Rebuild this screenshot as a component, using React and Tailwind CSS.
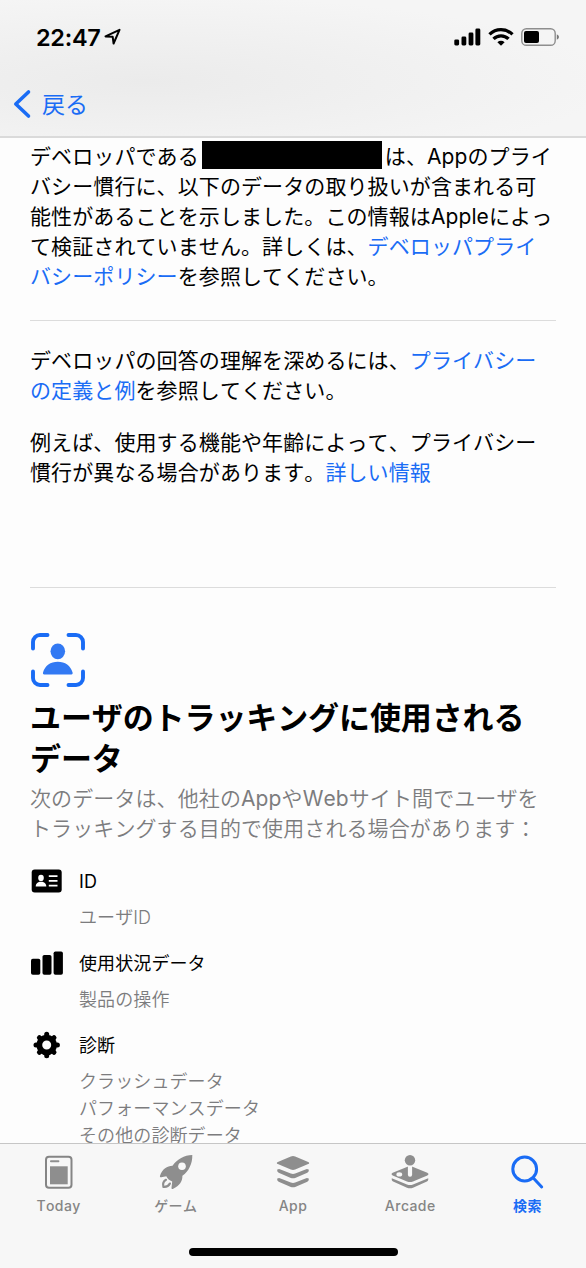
const BLUE = "#1a6cf5";

const items = [
  { title: "ID", icon: <IdIcon />, lines: ["ユーザID"] },
  { title: "使用状況データ", icon: <BarsIcon />, lines: ["製品の操作"] },
  {
    title: "診断",
    icon: <GearIcon />,
    lines: ["クラッシュデータ", "パフォーマンスデータ", "その他の診断データ"],
  },
];

const tabs = [
  { label: "Today", icon: <TodayIcon /> },
  { label: "ゲーム", icon: <RocketIcon /> },
  { label: "App", icon: <StackIcon /> },
  { label: "Arcade", icon: <ArcadeIcon /> },
  { label: "検索", icon: <SearchIcon />, active: true },
];

function LocationIcon() {
  return (
    <svg width="18" height="18" viewBox="0 0 18 18" fill="none" stroke="#000" strokeWidth="2" strokeLinejoin="round">
      <path d="M1.500 8.400 15.500 1.800 9.600 15.500 8.700 8.800z" />
    </svg>
  );
}

function SignalIcon() {
  return (
    <svg width="27" height="18" viewBox="0 0 27 18">
      <rect x="0.300" y="11.400" width="4.800" height="6" rx="1.400" />
      <rect x="7.500" y="8.600" width="4.800" height="8.800" rx="1.400" />
      <rect x="14.600" y="4.500" width="4.800" height="12.900" rx="1.400" />
      <rect x="21.400" y="0.500" width="4.900" height="16.900" rx="1.400" />
    </svg>
  );
}

function WifiIcon() {
  return (
    <svg width="26" height="18" viewBox="0 0 26 18" fill="none" stroke="#000" strokeWidth="3.300">
      <path d="M1.500 6.400a16.400 16.400 0 0 1 23 0" />
      <path d="M5.500 10.900a10.600 10.600 0 0 1 15 0" />
      <path d="M13 17.800l-3.600-3.500a5.200 5.200 0 0 1 7.200 0z" fill="#000" stroke="none" />
    </svg>
  );
}

function BatteryIcon() {
  return (
    <svg width="38" height="18" viewBox="0 0 38 18">
      <rect x="0.800" y="0.700" width="33.400" height="16.600" rx="4.600" fill="none" stroke="#8e8e8e" strokeWidth="1.400" />
      <rect x="3" y="3" width="15" height="12" rx="2" />
      <path d="M35.800 6.200q2.200 1 2.200 2.800t-2.200 2.800z" fill="#777" />
    </svg>
  );
}

function TrackingIcon() {
  return (
    <svg width="54" height="54" viewBox="0 0 54 54">
      <g fill="none" stroke={BLUE} strokeWidth="3.900" strokeLinecap="round">
        <path d="M2 15.500V9a7 7 0 0 1 7-7H16.500" />
        <path d="M37.500 2H45a7 7 0 0 1 7 7v6.500" />
        <path d="M52 38.500V45a7 7 0 0 1-7 7h-7.500" />
        <path d="M16.500 52H9a7 7 0 0 1-7-7v-6.500" />
      </g>
      <ellipse cx="26.800" cy="18.300" rx="7.300" ry="7.900" fill="#3279f3" />
      <path d="M13.200 41.400c-1.200 0-1.500-1-1.100-2.100C13.900 32.700 19.500 28.700 26.800 28.700s12.900 4 14.700 10.600c.4 1.100.1 2.100-1.100 2.100z" fill="#3279f3" />
    </svg>
  );
}

function IdIcon() {
  return (
    <svg width="32" height="26" viewBox="0 0 32 26">
      <rect x="0.700" y="1.500" width="30" height="23" rx="3" />
      <g fill="#fff">
        <ellipse cx="10" cy="9.900" rx="2.800" ry="3.100" />
        <path d="M4.700 18.600c0-3 2.200-4.800 5.300-4.800s5.300 1.800 5.300 4.800z" />
        <path d="M17.800 7.300h8.700v1.700h-8.700zM17.800 12h8.700v1.700h-8.700zM17.800 16.700h8.700v1.700h-8.700z" />
      </g>
    </svg>
  );
}

function BarsIcon() {
  return (
    <svg width="32" height="26" viewBox="0 0 32 26">
      <rect x="0" y="8.700" width="9.300" height="16" rx="1.800" />
      <rect x="11.500" y="5" width="9" height="19.700" rx="1.800" />
      <rect x="22.600" y="1.400" width="9.300" height="23.300" rx="1.800" />
    </svg>
  );
}

function GearIcon() {
  return (
    <svg width="32" height="28" viewBox="0 0 32 28" fill="none" stroke="#000">
      <circle cx="15.700" cy="14" r="7.400" strokeWidth="5.800" />
      <g strokeWidth="5" strokeLinecap="round">
        <path d="M15.700 3.300v2M15.700 22.700v2M5 14h2M24.400 14h2" />
        <path d="M8.400 6.700l1 1M22 20.300l1 1M23 6.700l-1 1M9.400 20.300l-1 1" />
      </g>
    </svg>
  );
}

function TodayIcon() {
  return (
    <svg width="36" height="36" viewBox="0 0 36 36" fill="#8e8e8e">
      <rect x="5" y="2.700" width="25.500" height="31" rx="3" fill="none" stroke="#858585" strokeWidth="2" />
      <rect x="9" y="6.300" width="9.400" height="1.900" rx="0.900" />
      <rect x="9" y="12.300" width="17.700" height="18" />
    </svg>
  );
}

function RocketIcon() {
  return (
    <svg width="36" height="36" viewBox="0 0 36 36" fill="#8e8e8e">
      <path d="M34.300 1C26 1.300 19.500 5 14.500 11.700 9 12 4.500 14.500 2 21.700c-.3 1.200.3 1.700 1.300 1.500l5-.9c1.200 2.500 3.200 4.300 5.900 5.100l-.7 6.400c-.1 1.100.7 1.500 1.700 1 6.300-3.100 9.400-7.300 9.200-13C31 17.200 34.500 9.500 34.300 1z" />
      <circle cx="24" cy="12.200" r="3.800" fill="#f8f8f8" />
      <path d="M8 25.800c-2.800 1.600-3.300 4.400-2.600 7 2.700.3 5.200-.6 6.500-3.200" fill="none" stroke="#8e8e8e" strokeWidth="2.200" strokeLinecap="round" />
    </svg>
  );
}

function StackIcon() {
  return (
    <svg width="36" height="36" viewBox="0 0 36 36" fill="#8e8e8e">
      <path d="M15.800 2.500q2.200-.9 4.400 0l13 5.400q2 1.100 0 2.200l-13 5.400q-2.200.9-4.400 0L2.800 10.100q-2-1.100 0-2.200z" />
      <path d="M2.300 15.600q1.500-.9 3.200-.2l10.300 4.200q2.200.9 4.400 0l10.300-4.200q1.700-.7 3.200.2c.3 1.700-.1 2.500-1.400 3.100l-12.100 5.200q-2.200.9-4.400 0L3.700 18.700C2.400 18.100 2 17.300 2.300 15.600z" />
      <path d="M2.300 24.600q1.500-.9 3.200-.2l10.300 4.200q2.200.9 4.400 0l10.300-4.200q1.700-.7 3.200.2c.3 1.700-.1 2.500-1.400 3.100l-12.100 5.200q-2.200.9-4.400 0L3.700 27.700C2.400 27.100 2 26.300 2.300 24.600z" />
    </svg>
  );
}

function ArcadeIcon() {
  return (
    <svg width="38" height="36" viewBox="0 0 38 36" fill="#8e8e8e">
      <path d="M16.500 12.700q2.500-.9 5 0L36.300 18.800q2.400 1.300 0 2.600l-14.300 6q-3 1.100-6 0l-14.300-6q-2.400-1.300 0-2.600z" />
      <path d="M.8 24.300l15.200 6.200q3 1 6 0l15.200-6.200c.3 1.800-.1 2.600-1.300 3.200l-13.900 6.200q-3 1.200-6 0L2.100 27.500C.9 26.900.5 26.100.8 24.300z" />
      <rect x="16.900" y="9" width="4.200" height="13.700" rx="2" fill="#f8f8f8" />
      <ellipse cx="8.300" cy="20.400" rx="2.900" ry="2.100" fill="#f8f8f8" />
      <circle cx="19" cy="6.300" r="5.200" />
    </svg>
  );
}

function SearchIcon() {
  return (
    <svg width="36" height="36" viewBox="0 0 36 36" fill="none" stroke={BLUE} strokeWidth="3" strokeLinecap="round">
      <circle cx="15.700" cy="15" r="11.900" />
      <path d="M24.300 24l8.400 9" />
    </svg>
  );
}

function Link({ children }) {
  return <a className="text-[#1a6cf5]">{children}</a>;
}

export default function App() {
  return (
    <div className="flex h-[1268px] w-[586px] flex-col overflow-hidden bg-[#fdfdfd] font-['Inter','Noto_Sans_CJK_JP',sans-serif] text-black [font-kerning:none]" lang="ja">
      <header className="h-[138px] shrink-0 border-b-2 border-[#dadada] bg-[radial-gradient(ellipse_at_25%_60%,#ebebeb,#f5f5f5_75%)]">
        <div className="flex h-[74px] items-center pl-9 pr-[27px]">
          <span className="mt-0.5 text-[23.500px] font-semibold tracking-[-0.3px]">22:47</span>
          <div className="ml-1">
            <LocationIcon />
          </div>
          <div className="ml-auto flex items-center">
            <SignalIcon />
            <div className="ml-[7px] mr-[7px]">
              <WifiIcon />
            </div>
            <BatteryIcon />
          </div>
        </div>
        <div className="flex h-[60px] items-center pl-3 text-[#1a6cf5]">
          <svg width="20" height="30" viewBox="0 0 20 30" fill="none" stroke={BLUE} strokeWidth="3.600" strokeLinecap="round" strokeLinejoin="round">
            <path d="M16.500 3 3.800 15l12.700 12" />
          </svg>
          <span className="ml-2.5 mt-0.5 text-[23px]">戻る</span>
        </div>
      </header>

      <main className="min-h-0 flex-1 overflow-hidden whitespace-nowrap px-[30px] text-[21px] leading-[30px] tracking-[0.1px]">
        <p className="mt-1">
          デベロッパである
          <span className="relative -top-[3px] ml-[3px] mr-[3px] inline-block h-7 w-[180px] bg-black align-middle" />
          は、Appのプライ
          <br />
          バシー慣行に、以下のデータの取り扱いが含まれる可
          <br />
          能性があることを示しました。この情報はAppleによっ
          <br />
          て検証されていません。詳しくは、<Link>デベロッパプライ</Link>
          <br />
          <Link>バシーポリシー</Link>を参照してください。
        </p>
        <hr className="mt-[28px] border-[#dcdcdc]" />
        <p className="mt-[25px]">
          デベロッパの回答の理解を深めるには、<Link>プライバシー</Link>
          <br />
          <Link>の定義と例</Link>を参照してください。
        </p>
        <p className="mt-[22px]">
          例えば、使用する機能や年齢によって、プライバシー
          <br />
          慣行が異なる場合があります。<Link>詳しい情報</Link>
        </p>
        <hr className="mt-[99px] border-[#dcdcdc]" />

        <div className="mt-[45px] pl-px">
          <TrackingIcon />
        </div>
        <h1 className="mt-[10px] text-[31px] font-bold leading-[41px] tracking-[-0.1px]">
          ユーザのトラッキングに使用される
          <br />
          データ
        </h1>
        <p className="mt-[5px] font-[350] text-[#7c7c7e]">
          次のデータは、他社の<span className="font-normal">App</span>や<span className="font-normal">Web</span>サイト間でユーザを
          <br />
          トラッキングする目的で使用される場合があります：
        </p>
        <ul className="mt-[24px] flex flex-col gap-[19px] text-[18px] leading-[27px]">
          {items.map((item) => (
            <li key={item.title} className="flex gap-4">
              <div className="ml-px -mt-px flex h-7 w-8 shrink-0 items-center">{item.icon}</div>
              <div>
                <p>{item.title}</p>
                <div className="mt-[9px] font-[350] text-[#7c7c7e]">
                  {item.lines.map((line) => (
                    <p key={line}>{line}</p>
                  ))}
                </div>
              </div>
            </li>
          ))}
        </ul>
      </main>

      <footer className="flex h-[125px] shrink-0 flex-col items-center border-t border-[#c6c6c6] bg-[#f7f7f7]">
        <nav className="grid w-full grid-cols-5 pt-[10px]">
          {tabs.map((tab) => (
            <div
              key={tab.label}
              className={`flex flex-col items-center text-[14px] leading-5 tracking-[0.4px] ${tab.active ? "font-bold text-[#1a6cf5]" : "font-medium text-[#858585]"}`}
            >
              {tab.icon}
              <span className="mt-[6px]">{tab.label}</span>
            </div>
          ))}
        </nav>
        <div className="mt-[32px] h-2 w-[209px] rounded-full bg-black" />
      </footer>
    </div>
  );
}
